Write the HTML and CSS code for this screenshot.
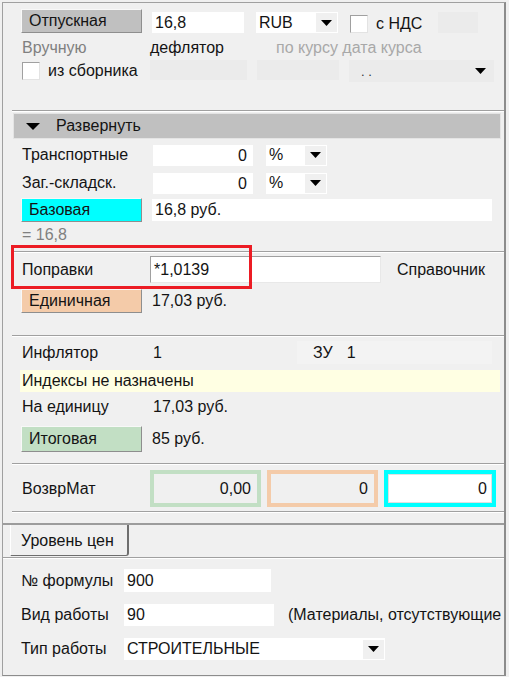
FILE: index.html
```html
<!DOCTYPE html>
<html lang="ru">
<head>
  <meta charset="UTF-8">
  <meta name="viewport" content="width=device-width, initial-scale=1.0">
  <title>Цена материала</title>
  <link rel="stylesheet" href="styles.css">
</head>
<body>
  <div class="window">
    <div class="upper">
      <div class="row row-top">
        <div class="btn btn-grey">Отпускная</div>
        <div class="field f-price">16,8</div>
        <div class="combo c-cur">
          <span class="combo-text">RUB</span>
          <span class="drop"><svg width="11" height="6" viewBox="0 0 11 6"><polygon points="0,0 11,0 5.5,6" fill="#000"/></svg></span>
        </div>
        <span class="check c-vat"></span>
        <span class="check-label">с НДС</span>
        <div class="blank b-small"></div>
      </div>

      <div class="row row-text">
        <span class="label muted">Вручную</span>
        <span class="deflator">дефлятор</span>
        <span class="faint">по курсу дата курса</span>
      </div>

      <div class="row row-src">
        <div class="label check-cell">
          <span class="check"></span>
          <span class="check-label">из сборника</span>
        </div>
        <div class="blank b-src"></div>
        <div class="blank b-rate"></div>
        <div class="blank b-date">
          <span class="dots">. .</span>
          <svg width="11" height="6" viewBox="0 0 11 6"><polygon points="0,0 11,0 5.5,6" fill="#000"/></svg>
        </div>
      </div>

      <div class="sep sep-head"></div>

      <div class="bar">
        <svg width="14" height="7" viewBox="0 0 14 7"><polygon points="0,0 14,0 7,7" fill="#000"/></svg>
        <span>Развернуть</span>
      </div>

      <div class="row row-pct">
        <span class="label">Транспортные</span>
        <div class="field f-num">0</div>
        <div class="combo c-pct">
          <span class="combo-text">%</span>
          <span class="drop"><svg width="11" height="6" viewBox="0 0 11 6"><polygon points="0,0 11,0 5.5,6" fill="#000"/></svg></span>
        </div>
      </div>

      <div class="row row-pct row-pct2">
        <span class="label">Заг.-складск.</span>
        <div class="field f-num">0</div>
        <div class="combo c-pct">
          <span class="combo-text">%</span>
          <span class="drop"><svg width="11" height="6" viewBox="0 0 11 6"><polygon points="0,0 11,0 5.5,6" fill="#000"/></svg></span>
        </div>
      </div>

      <div class="row row-btn row-base">
        <div class="btn btn-cyan">Базовая</div>
        <div class="field f-wide">16,8 руб.</div>
      </div>

      <div class="row row-note">
        <span class="muted">= 16,8</span>
      </div>

      <div class="sep sep-fix"></div>

      <div class="row row-fix">
        <span class="label">Поправки</span>
        <div class="field f-fix">*1,0139</div>
        <span class="link">Справочник</span>
      </div>

      <div class="row row-btn row-unit">
        <div class="btn btn-peach">Единичная</div>
        <span class="value">17,03 руб.</span>
      </div>

      <div class="sep sep-infl"></div>

      <div class="row row-infl">
        <span class="label">Инфлятор</span>
        <span class="infl-val">1</span>
        <div class="zu">
          <span class="zu-label">ЗУ</span>
          <span>1</span>
        </div>
      </div>

      <div class="hint">Индексы не назначены</div>

      <div class="row row-per">
        <span class="label">На единицу</span>
        <span class="value">17,03 руб.</span>
      </div>

      <div class="row row-btn row-total">
        <div class="btn btn-green">Итоговая</div>
        <span class="value">85 руб.</span>
      </div>

      <div class="sep sep-ret"></div>

      <div class="row row-ret">
        <span class="label">ВозврМат</span>
        <div class="vbox vbox-green">0,00</div>
        <div class="vbox vbox-peach">0</div>
        <div class="vbox vbox-cyan"><div class="vbox-inner">0</div></div>
      </div>

      <div class="sep sep-end"></div>

      <div class="marker"></div>
    </div>

    <div class="tabs">
      <div class="tab">Уровень цен</div>
    </div>

    <div class="lower">
      <div class="row row-formula">
        <span class="label">№ формулы</span>
        <div class="field f-formula">900</div>
      </div>
      <div class="row row-kind">
        <span class="label">Вид работы</span>
        <div class="field f-kind">90</div>
        <span class="kind-note">(Материалы, отсутствующие</span>
      </div>
      <div class="row row-type">
        <span class="label">Тип работы</span>
        <div class="combo c-type">
          <span class="combo-text">СТРОИТЕЛЬНЫЕ</span>
          <span class="drop"><svg width="11" height="6" viewBox="0 0 11 6"><polygon points="0,0 11,0 5.5,6" fill="#000"/></svg></span>
        </div>
      </div>
    </div>
  </div>
</body>
</html>
```

FILE: styles.css
```css
/* Basic styling */
body {
  margin: 0;
  background: #f0f0f0;
  font-family: "Liberation Sans", Arial, sans-serif;
  font-size: 16px;
  color: #141414;
}
.window {
  margin: 2px 0 0 2px;
  width: 501px;
  height: 672px;
  border-left: 1px solid #a0a0a0;
  border-top: 1px solid #a0a0a0;
  border-right: 2px solid #8c8c8c;
  border-bottom: 1px solid #8c8c8c;
  display: flex;
  flex-direction: column;
  overflow: hidden;
}

/* upper scroll panel */
.upper {
  position: relative;
  padding: 0 0 10px 9px;
  border-bottom: 2px solid #9c9c9c;
}
.row {
  display: flex;
  align-items: center;
  padding-left: 9px;
}
.label {
  width: 128px;
  padding-left: 1px;
  flex-shrink: 0;
}
.muted {
  color: #808080;
}
.faint {
  color: #a8a8a8;
}

.btn {
  width: 112px;
  height: 22px;
  line-height: 22px;
  padding-left: 7px;
  border: 1px solid;
  border-color: #f8f8f8 #8e8e8e #8e8e8e #f8f8f8;
  flex-shrink: 0;
}
.btn-grey { background: #c0c0c0; }
.btn-cyan { background: #00ffff; }
.btn-peach { background: #f4cba9; }
.btn-green { background: #c2dfc4; }

.field {
  background: #fff;
  height: 21px;
  line-height: 21px;
  padding: 0 3px;
  box-sizing: border-box;
  flex-shrink: 0;
}
.blank {
  background: #ebebeb;
  flex-shrink: 0;
}
.combo {
  display: flex;
  align-items: center;
  background: #fff;
  height: 21px;
  padding: 1px 1px 1px 3px;
  box-sizing: border-box;
  flex-shrink: 0;
}
.combo-text {
  flex: 1;
}
.drop {
  width: 21px;
  height: 19px;
  background: #f0f0f0;
  display: flex;
  align-items: center;
  justify-content: center;
}
.check {
  width: 16px;
  height: 16px;
  background: #fff;
  border: 1px solid;
  border-color: #a0a0a0 #e3e3e3 #e3e3e3 #a0a0a0;
  flex-shrink: 0;
}
.check-label {
  margin-left: 8px;
}

/* first block */
.row-top {
  margin-top: 6px;
  height: 24px;
  align-items: flex-end;
}
.f-price {
  margin-left: 10px;
  width: 92px;
}
.c-cur {
  margin-left: 12px;
  width: 82px;
}
.c-vat {
  margin-left: 12px;
}
.b-small {
  margin-left: 16px;
  width: 40px;
  height: 21px;
}
.row-text {
  margin-top: 6px;
  height: 18px;
}
.deflator {
  width: 126px;
}
.row-src {
  margin-top: 3px;
  height: 22px;
}
.check-cell {
  display: flex;
  align-items: center;
}
.b-src {
  width: 97px;
  height: 20px;
  align-self: flex-start;
}
.b-rate {
  margin-left: 10px;
  width: 82px;
  height: 20px;
  align-self: flex-start;
}
.b-date {
  margin-left: 10px;
  width: 145px;
  height: 22px;
  display: flex;
  align-items: center;
  justify-content: space-between;
  padding: 0 8px 0 12px;
  box-sizing: border-box;
  align-self: flex-start;
}
.dots {
  font-size: 13px;
  color: #333;
}

.sep {
  border-top: 1px solid #a0a0a0;
  border-bottom: 1px solid #fff;
}
.sep-head { margin-top: 28px; }
.sep-fix { margin-top: 7px; }
.sep-infl { margin-top: 22px; }
.sep-ret { margin-top: 11px; }
.sep-end { margin-top: 4px; }

.bar {
  margin: 1px 3px 0 1px;
  height: 24px;
  background: #c0c0c0;
  border: 1px solid #e4e4e4;
  display: flex;
  align-items: center;
  padding-left: 12px;
}
.bar span {
  margin-left: 16px;
}

.row-pct {
  margin-top: 5px;
  height: 22px;
}
.row-pct2 {
  margin-top: 6px;
}
.f-num {
  margin-left: 3px;
  width: 100px;
  text-align: right;
  padding-right: 6px;
}
.c-pct {
  margin-left: 13px;
  width: 61px;
}

.row-base {
  margin-top: 4px;
  height: 24px;
}
.f-wide {
  margin-left: 10px;
  width: 340px;
  height: 22px;
  line-height: 22px;
}
.row-note {
  margin-top: 4px;
  height: 18px;
}
.row-note span {
  padding-left: 1px;
}

.row-fix {
  margin-top: 3px;
  height: 27px;
}
.f-fix {
  width: 231px;
  height: 27px;
  line-height: 25px;
  border: 1px solid;
  border-color: #a0a0a0 #e8e8e8 #e8e8e8 #a0a0a0;
}
.link {
  margin-left: 16px;
}
.row-unit {
  margin-top: 6px;
  height: 24px;
}
.value {
  margin-left: 10px;
}

.row-infl {
  margin-top: 4px;
  height: 23px;
}
.infl-val {
  width: 144px;
  padding-left: 3px;
}
.zu {
  display: flex;
  align-items: center;
  height: 23px;
  width: 195px;
  background: #f3f3f3;
}
.zu-label {
  margin-left: 16px;
  margin-right: 14px;
}

.hint {
  margin: 6px 4px 0 8px;
  height: 22px;
  line-height: 22px;
  background: #ffffe3;
  padding-left: 2px;
}
.row-per {
  margin-top: 5px;
  height: 20px;
}
.row-per .value {
  margin-left: 3px;
}
.row-total .value {
  margin-left: 10px;
}
.row-total {
  margin-top: 9px;
  height: 26px;
}
.row-total .btn {
  height: 24px;
  line-height: 24px;
}

.row-ret {
  margin-top: 5px;
  height: 37px;
}
.vbox {
  width: 111px;
  height: 37px;
  box-sizing: border-box;
  border: 4px solid;
  text-align: right;
  padding-right: 6px;
  line-height: 29px;
  margin-right: 6px;
}
.vbox-green { border-color: #c2dfc4; }
.vbox-peach { border-color: #f4cba9; }
.vbox-cyan {
  width: 112px;
  border-color: #00ffff;
  padding: 0;
  margin-right: 0;
}
.vbox-inner {
  background: #fff;
  border: 1px solid #e0e0e0;
  height: 27px;
  line-height: 27px;
  padding-right: 4px;
}

/* highlight round the correction row */
.marker {
  position: absolute;
  left: 8px;
  top: 242px;
  width: 235px;
  height: 38px;
  border: 3px solid #ec1c24;
}

/* tabs */
.tabs {
  height: 32px;
  padding-left: 7px;
  border-bottom: 1px solid #a0a0a0;
  box-shadow: 0 1px 0 #fff;
}
.tab {
  width: 106px;
  height: 30px;
  line-height: 32px;
  padding-left: 10px;
  border-left: 1px solid #fff;
  border-right: 2px solid #6e6e6e;
  border-bottom: 1px solid #6e6e6e;
  border-bottom-right-radius: 3px;
}

/* lower block */
.lower {
  padding-left: 8px;
}
.lower .label {
  width: 103px;
  padding-left: 1px;
}
.row-formula {
  margin-top: 11px;
  height: 23px;
}
.f-formula {
  width: 147px;
  height: 23px;
  line-height: 23px;
}
.row-kind {
  margin-top: 12px;
  height: 22px;
}
.f-kind {
  width: 150px;
  height: 22px;
  line-height: 22px;
}
.kind-note {
  margin-left: 14px;
  white-space: nowrap;
}
.row-type {
  margin-top: 12px;
  height: 22px;
}
.c-type {
  width: 261px;
  height: 22px;
}
```
